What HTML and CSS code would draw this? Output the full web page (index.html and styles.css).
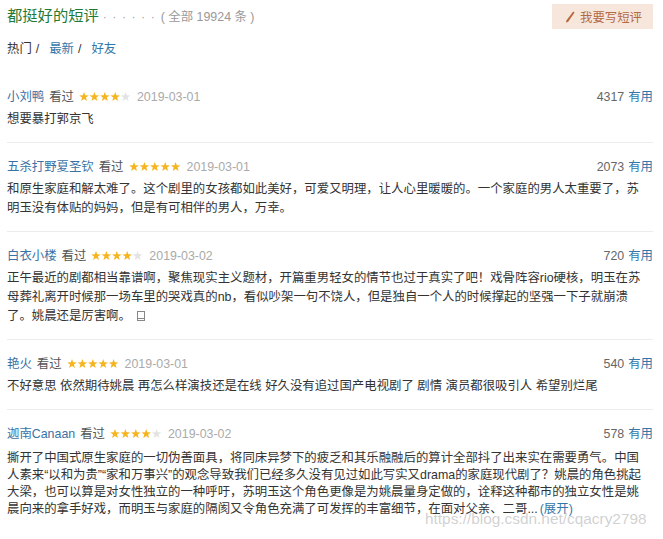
FILE: index.html
```html
<!DOCTYPE html>
<html lang="zh-CN">
<head>
<meta charset="utf-8">
<title>都挺好的短评</title>
<link rel="stylesheet" href="styles.css">
</head>
<body>
<svg class="defs" width="0" height="0" aria-hidden="true">
  <defs>
    <polygon id="star" points="5,0 6.2,3.35 9.76,3.45 6.95,5.6 7.94,9.05 5,7 2.06,9.05 3.05,5.6 0.24,3.45 3.8,3.35"/>
  </defs>
</svg>
<div class="page">
  <div class="top">
    <div class="title">都挺好的短评<span class="dots">· · · · · ·</span><span class="count">( 全部 19924 条 )</span></div>
    <a class="write-btn">
      <svg class="pencil" width="10" height="12" viewBox="0 0 10 12"><path d="M8.2 0.6 L9.6 1.6 L3 11 L1 11.6 L1.4 9.6 Z" fill="#b8683c"/></svg>
      <span>我要写短评</span>
    </a>
  </div>
  <div class="tabs">
    <span class="tab-on">热门</span><span class="sep">/</span><a class="tab">最新</a><span class="sep">/</span><a class="tab">好友</a>
  </div>

  <div class="comments">
    <div class="comment">
      <div class="c-head">
        <div class="c-info">
          <a class="name">小刘鸭</a><span class="seen">看过</span>
          <svg class="stars" width="52" height="10" viewBox="0 0 52 10"><use href="#star" x="0" fill="#f5b520"/><use href="#star" x="10.4" fill="#f5b520"/><use href="#star" x="20.8" fill="#f5b520"/><use href="#star" x="31.2" fill="#f5b520"/><use href="#star" x="41.6" fill="#e3e3e3"/></svg>
          <span class="date">2019-03-01</span>
        </div>
        <div class="votes"><span class="num">4317</span><a class="useful">有用</a></div>
      </div>
      <p class="c-text">想要暴打郭京飞</p>
    </div>

    <div class="comment">
      <div class="c-head">
        <div class="c-info">
          <a class="name">五杀打野夏圣钦</a><span class="seen">看过</span>
          <svg class="stars" width="52" height="10" viewBox="0 0 52 10"><use href="#star" x="0" fill="#f5b520"/><use href="#star" x="10.4" fill="#f5b520"/><use href="#star" x="20.8" fill="#f5b520"/><use href="#star" x="31.2" fill="#f5b520"/><use href="#star" x="41.6" fill="#f5b520"/></svg>
          <span class="date">2019-03-01</span>
        </div>
        <div class="votes"><span class="num">2073</span><a class="useful">有用</a></div>
      </div>
      <p class="c-text">和原生家庭和解太难了。这个剧里的女孩都如此美好，可爱又明理，让人心里暖暖的。一个家庭的男人太重要了，苏<br>明玉没有体贴的妈妈，但是有可相伴的男人，万幸。</p>
    </div>

    <div class="comment">
      <div class="c-head">
        <div class="c-info">
          <a class="name">白衣小楼</a><span class="seen">看过</span>
          <svg class="stars" width="52" height="10" viewBox="0 0 52 10"><use href="#star" x="0" fill="#f5b520"/><use href="#star" x="10.4" fill="#f5b520"/><use href="#star" x="20.8" fill="#f5b520"/><use href="#star" x="31.2" fill="#f5b520"/><use href="#star" x="41.6" fill="#e3e3e3"/></svg>
          <span class="date">2019-03-02</span>
        </div>
        <div class="votes"><span class="num">720</span><a class="useful">有用</a></div>
      </div>
      <p class="c-text">正午最近的剧都相当靠谱啊，聚焦现实主义题材，开篇重男轻女的情节也过于真实了吧！戏骨阵容rio硬核，明玉在苏<br>母葬礼离开时候那一场车里的哭戏真的nb，看似吵架一句不饶人，但是独自一个人的时候撑起的坚强一下子就崩溃<br>了。姚晨还是厉害啊。<svg class="mobile" width="8" height="10" viewBox="0 0 8 10"><rect x="0.5" y="0.5" width="7" height="9" fill="none" stroke="#888" stroke-width="1"/><line x1="0.5" y1="7.5" x2="7.5" y2="7.5" stroke="#888" stroke-width="1"/></svg></p>
    </div>

    <div class="comment">
      <div class="c-head">
        <div class="c-info">
          <a class="name">艳火</a><span class="seen">看过</span>
          <svg class="stars" width="52" height="10" viewBox="0 0 52 10"><use href="#star" x="0" fill="#f5b520"/><use href="#star" x="10.4" fill="#f5b520"/><use href="#star" x="20.8" fill="#f5b520"/><use href="#star" x="31.2" fill="#f5b520"/><use href="#star" x="41.6" fill="#f5b520"/></svg>
          <span class="date">2019-03-01</span>
        </div>
        <div class="votes"><span class="num">540</span><a class="useful">有用</a></div>
      </div>
      <p class="c-text">不好意思 依然期待姚晨 再怎么样演技还是在线 好久没有追过国产电视剧了 剧情 演员都很吸引人 希望别烂尾</p>
    </div>

    <div class="comment last">
      <div class="c-head">
        <div class="c-info">
          <a class="name">迦南Canaan</a><span class="seen">看过</span>
          <svg class="stars" width="52" height="10" viewBox="0 0 52 10"><use href="#star" x="0" fill="#f5b520"/><use href="#star" x="10.4" fill="#f5b520"/><use href="#star" x="20.8" fill="#f5b520"/><use href="#star" x="31.2" fill="#f5b520"/><use href="#star" x="41.6" fill="#e3e3e3"/></svg>
          <span class="date">2019-03-02</span>
        </div>
        <div class="votes"><span class="num">578</span><a class="useful">有用</a></div>
      </div>
      <p class="c-text tight">撕开了中国式原生家庭的一切伪善面具，将同床异梦下的疲乏和其乐融融后的算计全部抖了出来实在需要勇气。中国<br>人素来“以和为贵”“家和万事兴”的观念导致我们已经多久没有见过如此写实又drama的家庭现代剧了？姚晨的角色挑起<br>大梁，也可以算是对女性独立的一种呼吁，苏明玉这个角色更像是为姚晨量身定做的，诠释这种都市的独立女性是姚<br>晨向来的拿手好戏，而明玉与家庭的隔阂又令角色充满了可发挥的丰富细节，在面对父亲、二哥...<a class="expand">(展开)</a></p>
    </div>
  </div>

  <div class="watermark">https://blog.csdn.net/cqacry2798</div>
</div>
</body>
</html>
```

FILE: styles.css
```css
* { box-sizing: border-box; }

body {
  margin: 0;
  background: #fff;
  color: #333;
  font-family: "Liberation Sans", "Noto Sans CJK SC", sans-serif;
  font-size: 12.4px;
}

.defs { position: absolute; }

a { color: #37a; text-decoration: none; }

.page {
  position: relative;
  height: 539px;
  overflow: hidden;
  padding: 0 10px 0 7px;
}

.top {
  display: flex;
  justify-content: space-between;
  align-items: center;
  padding-top: 4px;
  height: 29px;
}

.title {
  font-size: 15.3px;
  line-height: 25px;
  color: #1f7a36;
}

.title .dots {
  font-size: 12.4px;
  color: #aaa;
  margin-left: 4px;
  letter-spacing: 1px;
}

.title .count {
  font-size: 12.4px;
  color: #999;
  margin-left: 5px;
}

.write-btn {
  display: flex;
  align-items: center;
  gap: 5px;
  width: 101px;
  height: 25px;
  padding-left: 13px;
  background: #f7e6dc;
  color: #b26b44;
  font-size: 12.4px;
}

.pencil { flex: none; }

.tabs {
  margin-top: 10px;
  line-height: 20px;
  color: #333;
}

.tabs .sep {
  margin: 0 10px 0 4px;
  color: #333;
}

.comments { margin-top: 14px; }

.comment {
  padding: 14px 0 13px;
  border-bottom: 1px solid #ececec;
}

.comment.last { border-bottom: none; }

.c-head {
  display: flex;
  justify-content: space-between;
  align-items: center;
  height: 20px;
  line-height: 20px;
}

.c-info {
  display: flex;
  align-items: center;
}

.name { color: #3a72a4; }

.seen {
  margin-left: 5px;
  color: #555;
}

.stars {
  margin-left: 5px;
  display: block;
}

.date {
  margin-left: 6px;
  color: #aaa;
}

.votes .num { color: #666; }

.votes .useful { margin-left: 4px; }

.c-text {
  margin: 3px 0 0;
  line-height: 19px;
  white-space: nowrap;
}

.c-text.tight { line-height: 17px; margin-top: 6px; }

.mobile {
  margin-left: 6px;
  vertical-align: -1px;
}

.expand { margin-left: 2px; }

.watermark {
  position: absolute;
  left: 425px;
  top: 510px;
  font-size: 15.4px;
  color: rgba(170, 170, 170, 0.55);
  pointer-events: none;
}
```
